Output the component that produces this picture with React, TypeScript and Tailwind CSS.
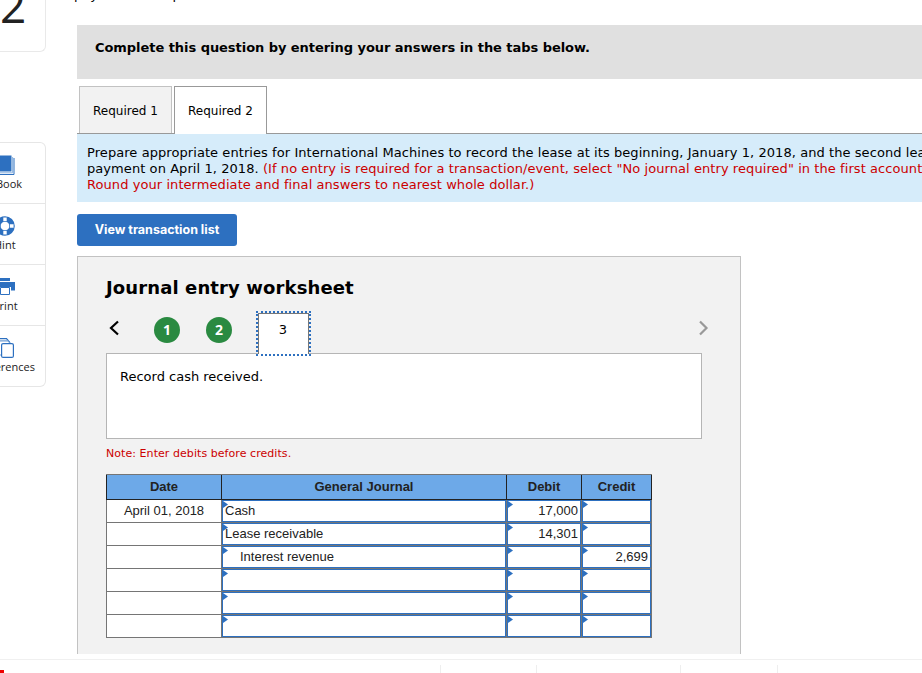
import clsx from "clsx";
import type { ReactNode } from "react";

interface JournalRow {
  date?: string;
  account?: string;
  indent?: boolean;
  debit?: string;
  credit?: string;
}

const ROWS: JournalRow[] = [
  { date: "April 01, 2018", account: "Cash", debit: "17,000" },
  { account: "Lease receivable", debit: "14,301" },
  { account: "Interest revenue", indent: true, credit: "2,699" },
  {},
  {},
  {},
];

const COLUMNS = "grid grid-cols-[114px_284px_74px_69px] gap-x-px px-px";

function BookIcon() {
  return (
    <svg width="28" height="22" viewBox="0 0 28 22" className="block">
      <path d="M0 0.5H24.5V16.5H0Z" fill="#2d70c0" />
      <path d="M0 17.8H25.6V2" fill="none" stroke="#8db3df" />
      <path d="M0 19.5H27V3" fill="none" stroke="#2d70c0" />
    </svg>
  );
}

function HintIcon() {
  return (
    <svg width="20" height="20" viewBox="0 0 20 20" className="block">
      <circle cx="10" cy="10" r="6.9" fill="none" stroke="#2d70c0" strokeWidth="5.8" />
      <g stroke="#fff" strokeWidth="3.4">
        <path d="M10 1.4V5.2M10 14.8V18.6M1.4 10H5.2M14.8 10H18.6" />
      </g>
      <circle cx="10" cy="10" r="4.1" fill="#fff" />
    </svg>
  );
}

function PrintIcon() {
  return (
    <svg width="20" height="18" viewBox="0 0 20 18" className="block">
      <path d="M5 0H15V3H5ZM0 4H20V12.5H16V9H4V12.5H0Z" fill="#2d70c0" />
      <path d="M5.5 9.5H14.5V16.5H5.5Z" fill="#fff" stroke="#2d70c0" />
    </svg>
  );
}

function ReferencesIcon() {
  return (
    <svg width="20" height="20" viewBox="0 0 20 20" className="block" fill="#fff" stroke="#2d70c0" strokeWidth="1.2">
      <path d="M1 .6H11.5L14.5 4V16H1Z" />
      <path d="M3.5 2.8H13L16 6V17H3.5Z" stroke="#6f9dd4" />
      <rect x="6.6" y="5.6" width="11.8" height="13.8" rx="1.5" />
    </svg>
  );
}

function SidebarItem({ icon, label, className }: { icon: ReactNode; label: string; className: string }) {
  return (
    <div className="flex h-[61px] flex-col border-t border-[#e6e6e6] first:h-[60px] first:border-t-0">
      {icon}
      <span className={clsx("whitespace-nowrap font-['Open_Sans',sans-serif] text-[11px] leading-[14px] text-[#222]", className)}>
        {label}
      </span>
    </div>
  );
}

function Sidebar() {
  return (
    <aside className="flex w-[46px] shrink-0 flex-col overflow-hidden">
      <div className="h-[52px] overflow-hidden rounded-br-md border-r border-b border-[#e9e9e9]">
        <div className="-mt-[18px] font-['Open_Sans',sans-serif] text-[46px] leading-[46px] font-medium text-[#222]">2</div>
      </div>
      <nav className="mt-[90px] h-[245px] overflow-hidden rounded-r-md border-y border-r border-[#e6e6e6]">
        <SidebarItem icon={<div className="mt-3 -ml-[13px]"><BookIcon /></div>} label="Book" className="-ml-1" />
        <SidebarItem icon={<div className="mt-3 -ml-[5px]"><HintIcon /></div>} label="Hint" className="-ml-[6px] mt-[2px]" />
        <SidebarItem icon={<div className="mt-[13px] -ml-[5px]"><PrintIcon /></div>} label="Print" className="-ml-[7px] mt-[3px]" />
        <SidebarItem icon={<div className="mt-3 -ml-[5px]"><ReferencesIcon /></div>} label="References" className="-ml-[22px] mt-[2px]" />
      </nav>
    </aside>
  );
}

function EntryCell({ children, className }: { children?: ReactNode; className?: string }) {
  return (
    <div className={clsx("relative border border-[#2d70c0] bg-white leading-[20px]", className)}>
      <svg width="5" height="7" viewBox="0 0 5 7" className="absolute top-0 left-0">
        <path d="M0 0L5 3.5L0 7Z" fill="#2d70c0" />
      </svg>
      <span className="relative">{children}</span>
    </div>
  );
}

function JournalTable() {
  return (
    <div className="mt-[13px] w-[546px] bg-[#757575] py-px font-['Liberation_Sans',Arial,sans-serif] text-[13px] text-[#222]">
      <div className={clsx(COLUMNS, "h-[25px] border-b border-[#222] bg-[#222] text-center leading-6 font-bold")}>
        <div className="bg-[#6da9e8]">Date</div>
        <div className="bg-[#6da9e8]">General Journal</div>
        <div className="bg-[#6da9e8]">Debit</div>
        <div className="bg-[#6da9e8]">Credit</div>
      </div>
      <div className="flex flex-col gap-px">
        {ROWS.map((row, i) => (
          <div key={i} className={clsx(COLUMNS, "h-[22px]")}>
            <div className="bg-white text-center leading-[22px]">{row.date}</div>
            <EntryCell className={row.indent ? "pl-[17px]" : "pl-[2px]"}>{row.account}</EntryCell>
            <EntryCell className="pr-[2px] text-right">{row.debit}</EntryCell>
            <EntryCell className="pr-[2px] text-right">{row.credit}</EntryCell>
          </div>
        ))}
      </div>
    </div>
  );
}

function WorksheetPager() {
  return (
    <div className="flex h-[46px] items-start">
      <svg width="18" height="18" viewBox="0 0 18 18" className="mt-2" fill="none" stroke="#000" strokeWidth="2.2">
        <path d="M12 2.5L5 9L12 15.5" />
      </svg>
      <div className="mt-[6px] ml-[30px] size-[26px] rounded-full bg-[#2a8a41] text-center font-['Open_Sans',sans-serif] text-[14px] leading-[26px] font-bold text-white">1</div>
      <div className="mt-[6px] ml-[26px] size-[26px] rounded-full bg-[#2a8a41] text-center font-['Open_Sans',sans-serif] text-[14px] leading-[26px] font-bold text-white">2</div>
      <div className="relative z-10 ml-6 h-[45px] w-[55px] border-2 border-dotted border-[#2d70c0]">
        <div className="h-[41px] border-x border-t border-[#777] bg-white pr-px text-center text-[13px] leading-[32px]">3</div>
      </div>
      <svg width="18" height="18" viewBox="0 0 18 18" className="mt-2 ml-[382px]" fill="none" stroke="#999" strokeWidth="2.2">
        <path d="M7 2.5L13.5 9L7 15.5" />
      </svg>
    </div>
  );
}

function Worksheet() {
  return (
    <section className="mt-[10px] h-[398px] w-[664px] border-x border-t border-[#c2c2c2] bg-[#f2f2f2] pl-7">
      <h2 className="pt-[20px] text-[18px] leading-[22px] font-bold tracking-[0.12px]">Journal entry worksheet</h2>
      <div className="mt-[12px]">
        <WorksheetPager />
      </div>
      <div className="-mt-1 h-[86px] w-[596px] border border-[#b5b5b5] bg-white px-[13px] pt-[15px] text-[13px] leading-4">
        Record cash received.
      </div>
      <p className="mt-[7px] text-[11px] leading-[15px] tracking-[0.06px] text-[#c00]">Note: Enter debits before credits.</p>
      <JournalTable />
    </section>
  );
}

export default function App() {
  return (
    <div className="flex h-[673px] w-[922px] flex-col overflow-hidden bg-white font-[Verdana,'DejaVu_Sans',sans-serif] text-black">
      <div className="flex h-[659px]">
        <Sidebar />
        <main className="ml-[31px] w-[845px] whitespace-nowrap">
          <p className="-mt-[13px] -ml-[3px] h-[38px] text-[13px] leading-4">payable at the price,</p>
          <div className="h-[54px] bg-[#e0e0e0] pt-[15px] pl-[18px] text-[13px] leading-4 font-bold tracking-[-0.05px]">
            Complete this question by entering your answers in the tabs below.
          </div>
          <div className="flex h-[55px] gap-[2px] border-b border-[#999] pt-[7px] pl-[2px] text-[12px] leading-[48px]">
            <div className="h-[47px] w-[93px] border-x border-t border-[#c2c2c2] bg-[#f2f2f2] text-center">Required 1</div>
            <div className="relative h-12 w-[93px] border-x border-t border-[#999] bg-white text-center">Required 2</div>
          </div>
          <div className="h-[68px] overflow-hidden bg-[#d6ecfa] pt-[11px] pl-[10px] text-[13px] leading-4 tracking-[0.07px]">
            <div>Prepare appropriate entries for International Machines to record the lease at its beginning, January 1, 2018, and the second lease</div>
            <div>
              payment on April 1, 2018. <span className="text-[#c00]">(If no entry is required for a transaction/event, select "No journal entry required" in the first account field.</span>
            </div>
            <div className="text-[#c00]">Round your intermediate and final answers to nearest whole dollar.)</div>
          </div>
          <button className="mt-3 block h-8 w-40 rounded-[3px] bg-[#2d70c0] font-[Inter,sans-serif] text-[12.5px] font-bold text-white">
            View transaction list
          </button>
          <Worksheet />
        </main>
      </div>
      <footer className="flex h-[14px] border-t border-[#f0f0f0] pt-[5px]">
        <div className="w-[441px] border-r border-[#eee]">
          <div className="mt-[5px] h-[3px] w-1 bg-[#e00]" />
        </div>
        <div className="w-24 border-r border-[#eee]" />
        <div className="w-36 border-r border-[#eee]" />
        <div className="w-[97px] border-r border-[#eee]" />
      </footer>
    </div>
  );
}
